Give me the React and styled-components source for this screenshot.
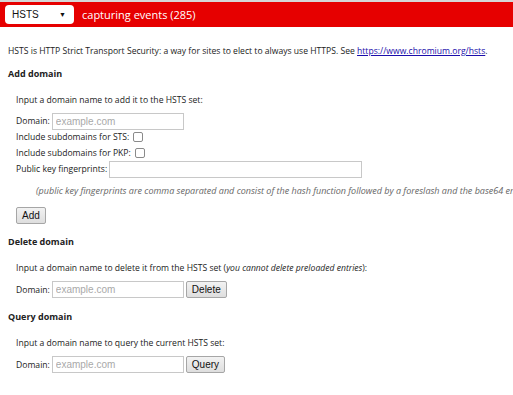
import { createGlobalStyle } from "styled-components";
import styled from "styled-components";

const GlobalStyle = createGlobalStyle`
  html, body {
    margin: 0;
    padding: 0;
    background: #fff;
    overflow-x: hidden;
  }
  body {
    font-family: "Open Sans", "Noto Sans", sans-serif;
    font-size: 8.6px;
    color: #222;
  }
`;

const TopBar = styled.div`
  display: flex;
  align-items: center;
  gap: 8px;
  height: 25px;
  border-top: 2px solid #d6d6d6;
  background: #e60000;
  padding-left: 5px;
`;

const Picker = styled.div`
  display: flex;
  align-items: center;
  justify-content: space-between;
  box-sizing: border-box;
  width: 69px;
  height: 19px;
  background: #fff;
  border-radius: 4px;
  padding: 0 8px 0 7px;
  font-family: "Liberation Sans", Arial, sans-serif;
  font-size: 10px;
  color: #111;
`;

const Arrow = styled.span`
  font-size: 7px;
  color: #111;
`;

const Status = styled.span`
  color: #fff;
  font-size: 11px;
`;

const Page = styled.div`
  padding: 0 8px;
  overflow: hidden;
`;

const Intro = styled.p`
  margin: 16px 0 0;
  line-height: 16px;
  white-space: nowrap;
`;

const Link = styled.a`
  color: #1a0dab;
  text-decoration: underline;
`;

const Heading = styled.h4`
  margin: ${(p) => p.$top}px 0 0;
  font-size: 9px;
  font-weight: 700;
  line-height: 16px;
`;

const Section = styled.div`
  padding-left: 8px;
`;

const Lead = styled.p`
  margin: 10px 0 0;
  line-height: 16px;
  white-space: nowrap;
`;

const Row = styled.div`
  display: flex;
  align-items: center;
  gap: 2px;
  height: ${(p) => p.$h || 16}px;
  margin-top: ${(p) => p.$top || 0}px;
  white-space: nowrap;
`;

const TextInput = styled.input`
  box-sizing: border-box;
  width: ${(p) => p.$w}px;
  height: 17px;
  margin: 0;
  padding: 0 3px;
  border: 1px solid #c8c8c8;
  border-radius: 0;
  font-family: "Liberation Sans", Arial, sans-serif;
  font-size: 10px;
  color: #222;
  outline: none;
  &::placeholder {
    color: #a9a9a9;
  }
`;

const Check = styled.input.attrs({ type: "checkbox" })`
  appearance: none;
  box-sizing: border-box;
  width: 10px;
  height: 10px;
  margin: 0 0 0 2px;
  border: 1px solid #8a8a8a;
  border-radius: 2px;
  background: #fff;
`;

const Note = styled.p`
  margin: 6px 0 0 20px;
  line-height: 16px;
  font-size: 9px;
  font-style: italic;
  color: #666;
  white-space: nowrap;
`;

const Button = styled.button`
  box-sizing: border-box;
  height: 17px;
  margin: ${(p) => p.$top || 0}px 0 0 ${(p) => p.$left || 0}px;
  padding: 0 5px;
  border: 1px solid #a6a6a6;
  border-radius: 2px;
  background: linear-gradient(#f2f2f2, #dedede);
  font-family: "Liberation Sans", Arial, sans-serif;
  font-size: 10px;
  color: #111;
`;

const DomainRow = ({ top, action }) => (
  <Row $h={17} $top={top}>
    Domain:
    <TextInput $w={132} placeholder="example.com" />
    {action && <Button>{action}</Button>}
  </Row>
);

export default function App() {
  return (
    <>
      <GlobalStyle />
      <TopBar>
        <Picker>
          HSTS
          <Arrow>▼</Arrow>
        </Picker>
        <Status>capturing events (285)</Status>
      </TopBar>
      <Page>
        <Intro>
          HSTS is HTTP Strict Transport Security: a way for sites to elect to
          always use HTTPS. See{" "}
          <Link href="#">https://www.chromium.org/hsts</Link>.
        </Intro>

        <Heading $top={7}>Add domain</Heading>
        <Section>
          <Lead>Input a domain name to add it to the HSTS set:</Lead>
          <Row $top={5}>
            Domain:
            <TextInput $w={132} placeholder="example.com" />
          </Row>
          <Row>
            Include subdomains for STS:
            <Check />
          </Row>
          <Row>
            Include subdomains for PKP:
            <Check />
          </Row>
          <Row>
            Public key fingerprints:
            <TextInput $w={253} />
          </Row>
          <Note>
            (public key fingerprints are comma separated and consist of the
            hash function followed by a foreslash and the base64 encoded
            fingerprint, for example "sha256/Guzek9lMwR3KeIS8wwS9gBvVtIg=")
          </Note>
          <Button $top={8}>Add</Button>
        </Section>

        <Heading $top={10}>Delete domain</Heading>
        <Section>
          <Lead>
            Input a domain name to delete it from the HSTS set (
            <i>you cannot delete preloaded entries</i>):
          </Lead>
          <DomainRow top={5} action="Delete" />
        </Section>

        <Heading $top={11}>Query domain</Heading>
        <Section>
          <Lead>Input a domain name to query the current HSTS set:</Lead>
          <DomainRow top={5} action="Query" />
        </Section>
      </Page>
    </>
  );
}
